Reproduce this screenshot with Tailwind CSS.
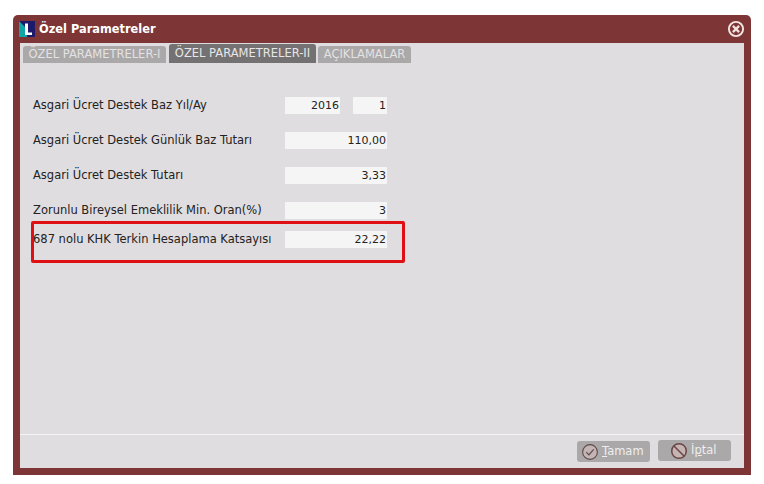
<!DOCTYPE html>
<html lang="en">
<head>
<meta charset="UTF-8">
<title>Özel Parametreler</title>
<script src="https://cdn.jsdelivr.net/npm/@tailwindcss/browser@4"></script>
</head>
<body class="bg-white w-[764px] h-[484px] overflow-hidden font-['DejaVu_Sans',sans-serif] text-[11.5px] text-[#222]">
  <div class="ml-[13px] mt-[15px] w-[738px] h-[460px] bg-[#7d3635] rounded-t-[5px] px-[7px] pb-[7px] flex flex-col">
    <!-- title bar -->
    <div class="h-[28px] flex items-center shrink-0">
      <svg width="16" height="16" viewBox="0 0 16 16" class="shrink-0 ml-[-1px]">
        <rect width="16" height="16" fill="#1d1a6b"/>
        <polygon points="0,0 8,8 8,16 0,16" fill="#12a5a8"/>
        <path d="M6 2.5h3V11.5h4V14H6z" fill="#fff"/>
      </svg>
      <span class="ml-[4px] pt-[2px] text-[11.4px] font-bold text-white">Özel Parametreler</span>
      <svg width="18" height="18" viewBox="0 0 18 18" class="ml-auto mr-[-1px]">
        <circle cx="9" cy="9" r="7.1" fill="none" stroke="#f3e4e2" stroke-width="1.9"/>
        <path d="M5.9 5.9l6.2 6.2M12.1 5.9l-6.2 6.2" stroke="#f3e4e2" stroke-width="2.2"/>
      </svg>
    </div>
    <!-- body -->
    <div class="relative flex-1 bg-[#e0dde0] flex flex-col">
      <div class="flex items-end h-[20px] pl-[3px] shrink-0 text-[11.5px] leading-none">
        <div class="w-[143px] h-[17px] bg-[#aaa8a9] text-[#e4e2e3] rounded-t-[3px] flex items-center justify-center">ÖZEL PARAMETRELER-I</div>
        <div class="ml-[3px] w-[147px] h-[19px] bg-[#737172] text-[#e8e6e7] rounded-t-[3px] flex items-center justify-center">ÖZEL PARAMETRELER-II</div>
        <div class="ml-[2px] w-[93px] h-[17px] bg-[#aaa8a9] text-[#e4e2e3] rounded-t-[3px] flex items-center justify-center">AÇIKLAMALAR</div>
      </div>
      <div class="flex-1 pl-[13px] pt-[34px]">
        <div class="flex items-center h-[17px]">
          <span class="w-[252px] pt-[1px]">Asgari Ücret Destek Baz Yıl/Ay</span>
          <span class="w-[55px] h-[17px] bg-[#f5f5f5] text-[11px] text-right pr-[1px] leading-[17px]">2016</span>
          <span class="ml-[13px] w-[34px] h-[17px] bg-[#f5f5f5] text-[11px] text-right pr-[1px] leading-[17px]">1</span>
        </div>
        <div class="flex items-center h-[17px] mt-[18px]">
          <span class="w-[252px] pt-[1px]">Asgari Ücret Destek Günlük Baz Tutarı</span>
          <span class="w-[102px] h-[17px] bg-[#f5f5f5] text-[11px] text-right pr-[1px] leading-[17px]">110,00</span>
        </div>
        <div class="flex items-center h-[17px] mt-[18px]">
          <span class="w-[252px] pt-[1px]">Asgari Ücret Destek Tutarı</span>
          <span class="w-[102px] h-[17px] bg-[#f5f5f5] text-[11px] text-right pr-[1px] leading-[17px]">3,33</span>
        </div>
        <div class="flex items-center h-[17px] mt-[18px]">
          <span class="w-[252px] pt-[1px]">Zorunlu Bireysel Emeklilik Min. Oran(%)</span>
          <span class="w-[102px] h-[17px] bg-[#f5f5f5] text-[11px] text-right pr-[1px] leading-[17px]">3</span>
        </div>
        <div class="flex items-center h-[17px] mt-[12px]">
          <span class="w-[252px]">687 nolu KHK Terkin Hesaplama Katsayısı</span>
          <span class="w-[102px] h-[17px] bg-[#f5f5f5] text-[11px] text-right pr-[1px] leading-[17px]">22,22</span>
        </div>
      </div>
      <!-- footer -->
      <div class="h-[34px] shrink-0 border-t border-[#f4f4f4] flex justify-end items-start pt-[5px] pr-[13px] text-[#eeeeee] text-[11.5px]">
        <button class="w-[73px] h-[21px] mt-[1px] bg-[#aaa8a9] rounded-[3px] flex items-center pl-[4px]">
          <svg width="18" height="18" viewBox="0 0 18 18" class="shrink-0">
            <circle cx="9" cy="9" r="7.4" fill="#c4b4b4" stroke="#5e4a4a" stroke-width="1.1"/>
            <path d="M5.3 9.2l2.6 2.7L12.7 6.3" fill="none" stroke="#5e4a4a" stroke-width="1.2"/>
          </svg>
          <span class="ml-[3px]"><span class="underline">T</span>amam</span>
        </button>
        <button class="ml-[8px] w-[73px] h-[21px] bg-[#aaa8a9] rounded-[3px] flex items-center pl-[12px]">
          <svg width="18" height="18" viewBox="0 0 18 18" class="shrink-0">
            <circle cx="9" cy="9" r="7.3" fill="#c4b4b4" stroke="#6d4545" stroke-width="1.5"/>
            <path d="M4 4l10 10" stroke="#6d4545" stroke-width="1.5"/>
          </svg>
          <span class="ml-[3px]">İ<span class="underline">p</span>tal</span>
        </button>
      </div>
      <!-- annotation -->
      <div class="absolute left-[11px] top-[178px] w-[374px] h-[42px] border-[3px] border-[#e00f14] rounded-[2px]"></div>
    </div>
  </div>
</body>
</html>
